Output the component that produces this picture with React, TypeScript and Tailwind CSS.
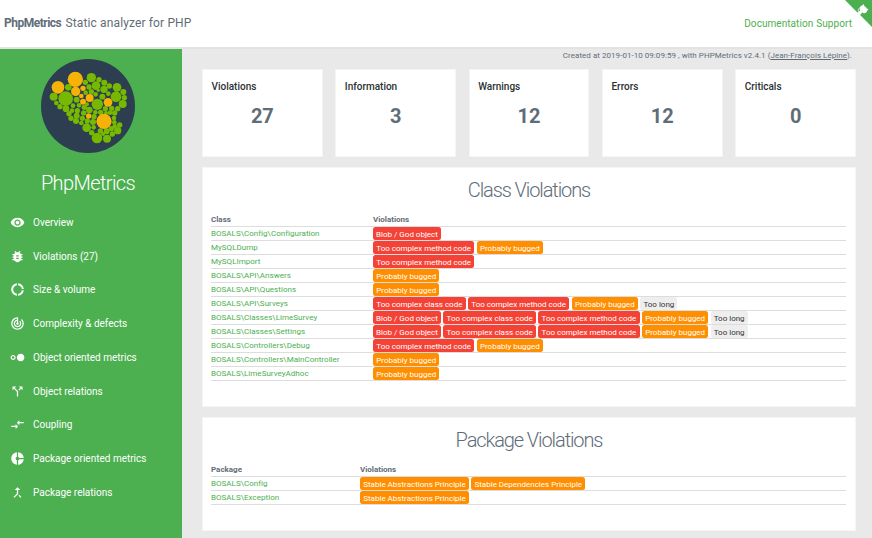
import React from "react";
import {
  MdVisibility,
  MdBugReport,
  MdDonutLarge,
  MdTrackChanges,
  MdHdrStrong,
  MdCallSplit,
  MdCompareArrows,
  MdDonutSmall,
  MdCallMerge,
} from "react-icons/md";

const nav = [
  { label: "Overview", Icon: MdVisibility },
  { label: "Violations (27)", Icon: MdBugReport },
  { label: "Size & volume", Icon: MdDonutLarge },
  { label: "Complexity & defects", Icon: MdTrackChanges },
  { label: "Object oriented metrics", Icon: MdHdrStrong },
  { label: "Object relations", Icon: MdCallSplit },
  { label: "Coupling", Icon: MdCompareArrows },
  { label: "Package oriented metrics", Icon: MdDonutSmall },
  { label: "Package relations", Icon: MdCallMerge },
];

const stats = [
  ["Violations", "27"],
  ["Information", "3"],
  ["Warnings", "12"],
  ["Errors", "12"],
  ["Criticals", "0"],
];

const tags = {
  blob: { text: "Blob / God object", style: "w-[68px] bg-[#f44336] text-white" },
  method: { text: "Too complex method code", style: "w-[101.4px] bg-[#f44336] text-white" },
  cls: { text: "Too complex class code", style: "w-[92.7px] bg-[#f44336] text-white" },
  bug: { text: "Probably bugged", style: "w-[66.4px] bg-[#ff8f00] text-white" },
  long: { text: "Too long", style: "w-[37px] bg-[#eeeeee] text-[#333]" },
  abs: { text: "Stable Abstractions Principle", style: "w-[109px] bg-[#ff8f00] text-white" },
  dep: { text: "Stable Dependencies Principle", style: "w-[114px] bg-[#ff8f00] text-white" },
};

type Tag = keyof typeof tags;
type Row = { name: string; found: Tag[] };

const classes: Row[] = [
  { name: "BOSALS\\Config\\Configuration", found: ["blob"] },
  { name: "MySQLDump", found: ["method", "bug"] },
  { name: "MySQLImport", found: ["method"] },
  { name: "BOSALS\\API\\Answers", found: ["bug"] },
  { name: "BOSALS\\API\\Questions", found: ["bug"] },
  { name: "BOSALS\\API\\Surveys", found: ["cls", "method", "bug", "long"] },
  { name: "BOSALS\\Classes\\LimeSurvey", found: ["blob", "cls", "method", "bug", "long"] },
  { name: "BOSALS\\Classes\\Settings", found: ["blob", "cls", "method", "bug", "long"] },
  { name: "BOSALS\\Controllers\\Debug", found: ["method", "bug"] },
  { name: "BOSALS\\Controllers\\MainController", found: ["bug"] },
  { name: "BOSALS\\LimeSurveyAdhoc", found: ["bug"] },
];

const packages: Row[] = [
  { name: "BOSALS\\Config", found: ["abs", "dep"] },
  { name: "BOSALS\\Exception", found: ["abs"] },
];

const orange = [
  [166, 88, 23], [114, 112, 19], [167, 124, 14], [189, 115, 8], [184, 138, 7],
  [189, 155, 9], [209, 144, 12], [264, 157, 13], [206, 198, 8], [252, 214, 23],
];

const green = [
  [214, 83, 14], [145, 112, 10], [101, 140, 12], [137, 146, 22], [109, 159, 7],
  [120, 170, 8], [138, 176, 10], [170, 149, 9], [196, 97, 8], [237, 89, 8],
  [253, 98, 9], [228, 107, 13], [207, 111, 8], [268, 108, 8], [291, 112, 13],
  [252, 118, 11], [214, 125, 8], [197, 128, 7], [227, 133, 7], [235, 121, 5],
  [310, 126, 9], [265, 131, 7], [288, 140, 16], [313, 143, 8], [247, 140, 9],
  [308, 162, 12], [232, 163, 17], [159, 167, 7], [177, 166, 7], [193, 172, 8],
  [172, 182, 8], [156, 182, 7], [147, 191, 8], [208, 180, 10], [201, 163, 6],
  [256, 176, 8], [275, 175, 8], [293, 176, 8], [242, 187, 8], [226, 187, 7],
  [258, 189, 6], [270, 188, 7], [284, 189, 8], [191, 189, 8], [170, 197, 9],
  [153, 205, 8], [187, 205, 8], [168, 213, 9], [222, 200, 8], [202, 213, 8],
  [219, 216, 9], [184, 219, 7], [282, 204, 7], [283, 217, 7], [200, 233, 13],
  [221, 232, 7], [299, 225, 8], [284, 229, 7], [274, 236, 8], [293, 242, 11],
  [215, 248, 8], [241, 243, 8], [260, 244, 9], [277, 252, 8], [231, 264, 16],
  [249, 252, 6], [261, 266, 12],
];

function Logo() {
  return (
    <svg viewBox="63 27 282 282" className="block h-[94px] w-[94px]">
      <circle cx="204" cy="168" r="141" fill="#2c3e50" />
      {green.map(([x, y, r]) => (
        <circle key={`${x}-${y}`} cx={x} cy={y} r={r} fill="#77b900" />
      ))}
      {orange.map(([x, y, r]) => (
        <circle key={`${x}-${y}`} cx={x} cy={y} r={r} fill="#f7b208" />
      ))}
    </svg>
  );
}

function Corner() {
  return (
    <svg viewBox="0 0 250 250" className="absolute top-0 right-0 h-[27px] w-[27px]">
      <path d="M0,0 L115,115 L130,115 L142,142 L250,250 L250,0 Z" fill="#4caf50" />
      <path
        d="M128.3,109.0 C113.8,99.7 119.0,89.6 119.0,89.6 C122.0,82.7 120.5,78.6 120.5,78.6 C119.2,72.0 123.4,76.3 123.4,76.3 C127.3,80.9 125.5,87.3 125.5,87.3 C122.9,97.6 130.6,101.9 134.4,103.2"
        fill="#fff"
      />
      <path
        d="M115.0,115.0 C114.9,115.1 118.7,116.5 119.8,115.4 L133.7,101.6 C136.9,99.2 139.9,98.4 142.2,98.6 C133.8,88.0 127.5,74.4 143.8,58.0 C148.5,53.4 154.0,51.2 159.7,51.0 C160.3,49.4 163.2,43.6 171.4,40.1 C171.4,40.1 176.1,42.5 178.8,56.2 C183.1,58.6 187.2,61.8 190.9,65.4 C194.5,69.0 197.7,73.2 200.1,77.6 C213.8,80.2 216.3,84.9 216.3,84.9 C212.7,93.1 206.9,96.0 205.4,96.6 C205.1,102.4 203.0,107.8 198.3,112.5 C181.9,128.9 168.3,122.5 157.7,114.1 C157.9,116.9 156.7,120.9 152.7,124.9 L141.0,136.5 C139.8,137.7 141.6,141.9 141.8,141.8 Z"
        fill="#fff"
      />
    </svg>
  );
}

function Table({ head, rows, column }: { head: string; rows: Row[]; column: string }) {
  return (
    <div className="mr-[9px] ml-2 text-[8px]">
      <div className="flex h-[14px] items-center border-b border-[#dddddd] leading-[13px] font-bold text-[#5f6d78]">
        <div className={column}>{head}</div>
        <div>Violations</div>
      </div>
      {rows.map((row) => (
        <div key={row.name} className="flex h-[14px] border-b border-[#dddddd] leading-[13px]">
          <div className={`${column} text-[#4caf50]`}>
            <span className="tracking-[0.03px]">{row.name}</span>
          </div>
          <div className="flex gap-[2.3px]">
            {row.found.map((key) => (
              <span
                key={key}
                className={`${tags[key].style} h-[13px] rounded-[2.5px] text-center leading-[15px] whitespace-nowrap`}
              >
                {tags[key].text}
              </span>
            ))}
          </div>
        </div>
      ))}
    </div>
  );
}

export default function App() {
  return (
    <div className="relative flex h-[538px] w-[872px] flex-col overflow-hidden bg-[#e9e9e9] font-[Roboto,sans-serif] text-[#5f6d78]">
      <header className="flex h-[49px] shrink-0 items-center justify-between border-b-2 border-[#e2e2e2] bg-white pr-5 pl-1">
        <div className="flex pb-[2px] text-[12px] leading-4 whitespace-nowrap">
          <span className="w-[61.5px] font-bold tracking-[-0.5px]">PhpMetrics</span>
          <span className="tracking-[0.13px]">Static analyzer for PHP</span>
        </div>
        <div className="flex gap-[3px] text-[10px] tracking-[0.06px] text-[#4caf50]">
          <a>Documentation</a>
          <a>Support</a>
        </div>
      </header>
      <Corner />
      <div className="flex min-h-0 flex-1">
        <aside className="flex w-[182px] shrink-0 flex-col bg-[#4caf50] text-white">
          <div className="flex flex-col items-center pt-[10px] pr-[6px]">
            <Logo />
            <h1 className="mt-[17px] text-[20px] leading-[26px] font-light tracking-[-0.6px]">PhpMetrics</h1>
          </div>
          <nav className="mt-[9.6px]">
            {nav.map(({ label, Icon }) => (
              <a key={label} className="flex h-[33.75px] items-center pl-[10px]">
                <Icon className="size-[15px]" />
                <span className="ml-2 text-[10px] whitespace-nowrap">{label}</span>
              </a>
            ))}
          </nav>
        </aside>
        <main className="min-w-0 flex-1 pr-4 pl-5">
          <p className="h-[20px] pr-1 text-right text-[8px] leading-[13px] tracking-[0.04px]">
            Created at 2019-01-10 09:09:59 , with PHPMetrics v2.4.1 (<u>Jean-François Lépine</u>).
          </p>
          <section className="grid grid-cols-5 gap-[12.6px]">
            {stats.map(([label, value]) => (
              <div key={label} className="h-[88px] border border-[#f5f5f5] bg-white px-2 pt-[9px]">
                <div className="pl-[0.5px] text-[10px] leading-4 font-medium text-[#2b2f33]">{label}</div>
                <div className="mt-2 text-center text-[20px] leading-[26px] font-bold">{value}</div>
              </div>
            ))}
          </section>
          <section className="mt-[10px] h-[240px] border border-[#f5f5f5] bg-white">
            <h2 className="mt-2 mb-[9px] text-center text-[20px] leading-7 font-light tracking-[-1.1px]">
              Class Violations
            </h2>
            <Table head="Class" rows={classes} column="w-[162px]" />
          </section>
          <section className="mt-[10px] h-[114px] border border-[#f5f5f5] bg-white">
            <h2 className="mt-2 mb-[9px] text-center text-[20px] leading-7 font-light tracking-[-1.1px]">
              Package Violations
            </h2>
            <Table head="Package" rows={packages} column="w-[149px]" />
          </section>
        </main>
      </div>
    </div>
  );
}
